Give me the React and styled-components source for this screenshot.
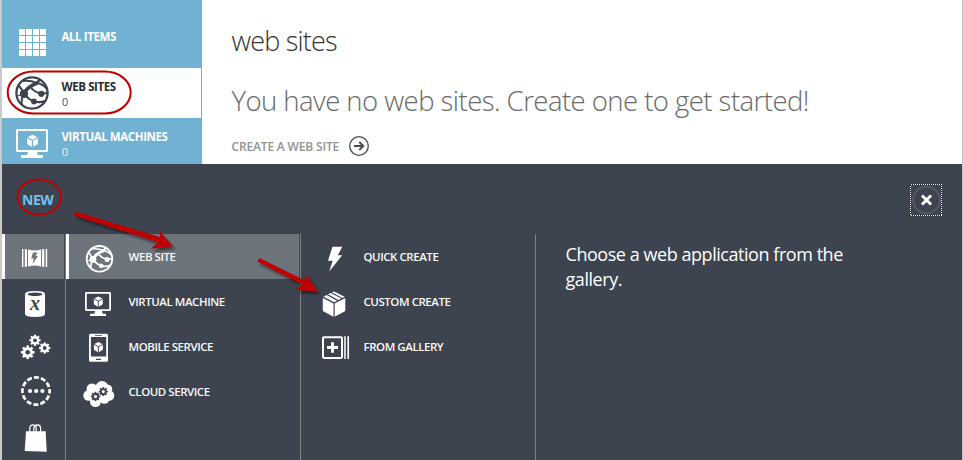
import React from 'react';
import styled, { createGlobalStyle } from 'styled-components';

const PANEL = '#3e444f';
const HILITE = '#6e747b';
const BLUE = '#71b1d1';

const GlobalStyle = createGlobalStyle`
  *, *::before, *::after { box-sizing: border-box; }
  body { margin: 0; overflow: hidden; font-family: "Open Sans", "Noto Sans", sans-serif; }
  svg { display: block; flex: none; }
`;

const Page = styled.div`
  position: relative;
  display: flex;
  flex-direction: column;
  width: 963px;
  height: 460px;
  overflow: hidden;
  background: #fff;
  border-left: 2px solid #cbcbcb;
  border-right: 1px solid #c4c6c8;
`;

const Top = styled.div`
  display: flex;
  height: 164px;
  overflow: hidden;
`;

const Sidebar = styled.nav`
  width: 200px;
  padding-top: 18px;
  background: ${BLUE};
`;

const NavItem = styled.div`
  display: flex;
  width: ${(p) => (p.$active ? '199px' : '200px')};
  height: 50px;
  background: ${(p) => (p.$active ? '#fff' : 'transparent')};
  color: ${(p) => (p.$active ? '#2b2b2b' : '#fff')};
`;

const NavText = styled.div`
  display: flex;
  flex-direction: column;
  padding: 11px 0 0 1.5px;
  white-space: nowrap;
`;

const NavTitle = styled.span`
  font-size: 11.5px;
  font-weight: 700;
  line-height: 16px;
  letter-spacing: -0.41px;
`;

const NavCount = styled.span`
  padding-left: 0.5px;
  font-size: 11px;
  font-weight: 400;
  line-height: 14px;
  opacity: 0.85;
`;

const Content = styled.main`
  display: flex;
  flex-direction: column;
  align-items: flex-start;
  padding: 21px 0 0 29.5px;
  white-space: nowrap;
`;

const Title = styled.h1`
  margin: 0;
  font-size: 27px;
  font-weight: 300;
  line-height: 40px;
  letter-spacing: -0.8px;
  color: #333;
`;

const Message = styled.p`
  margin: 20px 0 0;
  font-size: 27.5px;
  font-weight: 300;
  line-height: 40px;
  letter-spacing: -0.54px;
  color: #6a6a6a;
`;

const CreateLink = styled.a`
  display: flex;
  align-items: center;
  gap: 10px;
  height: 22px;
  margin-top: 14px;
  font-size: 12px;
  font-weight: 600;
  letter-spacing: -0.16px;
  color: #929292;
`;

const Drawer = styled.section`
  display: flex;
  flex-direction: column;
  flex: 1;
  background: ${PANEL};
  color: #fff;
`;

const DrawerHead = styled.header`
  display: flex;
  justify-content: space-between;
  height: 70px;
  padding: 20px 20px 0 20px;
`;

const DrawerTitle = styled.h2`
  margin: 0;
  font-size: 14px;
  font-weight: 700;
  line-height: 32px;
  letter-spacing: -0.5px;
  color: #70c3ee;
`;

const CloseButton = styled.button`
  width: 32px;
  height: 32px;
  padding: 0;
  border: 0;
  background: transparent;
`;

const Columns = styled.div`
  display: grid;
  grid-template-columns: 64px 235px 235px 1fr;
  flex: 1;
`;

const Column = styled.div`
  border-right: 1px solid #7f8388;
`;

const MenuItem = styled.div`
  display: flex;
  align-items: center;
  height: 45px;
  margin-right: 1px;
  padding-left: ${(p) => p.$indent}px;
  background: ${(p) => (p.$active ? HILITE : 'transparent')};
  box-shadow: ${(p) => (p.$active ? 'inset 3px 0 0 #fff' : 'none')};
`;

const MenuLabel = styled.span`
  padding: 0 0 1px ${(p) => p.$gap || 11.5}px;
  font-size: 11.5px;
  font-weight: 600;
  letter-spacing: -0.45px;
  white-space: nowrap;
  color: #f7f8f8;
`;

const Description = styled.p`
  margin: 0;
  padding: 8px 0 0 29.5px;
  width: 340px;
  font-size: 18px;
  line-height: 25px;
  letter-spacing: -0.45px;
`;

const Annotations = styled.svg`
  position: absolute;
  top: 0;
  left: -2px;
  pointer-events: none;
`;

/* Globe with connected nodes, drawn around the origin with radius 17. */
const GlobeMark = ({ color }) => (
  <g fill="none" stroke={color} strokeWidth="1.5">
    <circle r="15.6" strokeWidth="2.3" />
    <path d="M-8.5 1 Q-4 -7 5.5 -10" strokeWidth="3.6" />
    <path d="M-10 -12 Q-2 -13 5 -10 Q11 -9 15 -4" strokeWidth="2" />
    <path d="M-13.5 -8 Q-10 -4 -8.5 1 Q-11 6 -10.5 12" strokeWidth="2" />
    <path d="M-8 0 Q-4 6.500 2 8.500 Q8 10 13 8" strokeWidth="2.2" />
    <path d="M-1.500 -6 Q2 -1 9.500 .8 L15 0" strokeWidth="2" />
    <path d="M5 -10 L8 -14" strokeWidth="2.4" />
    <path d="M-15 3 L-8 1" strokeWidth="1.2" />
    <g fill={color} stroke="none">
      <circle cx="-8" cy=".8" r="4.200" />
      <circle cx="9.300" cy=".8" r="3.100" />
      <circle cx="2" cy="8.500" r="2.900" />
    </g>
  </g>
);

/* Isometric cube split by its three inner edges. */
const Cube = ({ x, y, s = 1, gap }) => (
  <g transform={`translate(${x} ${y}) scale(${s})`}>
    <path d="M0 -5.500 L4.700 -3 V2.700 L0 5.500 L-4.700 2.700 V-3Z" fill="#fff" />
    <path d="M-4.700 -3 L0 -.5 L4.700 -3 M0 -.5 V5.500" fill="none" stroke={gap} strokeWidth="1" />
  </g>
);

const Gear = ({ x, y, r, color = '#fff', teeth = 8, hole = PANEL }) => (
  <g transform={`translate(${x} ${y})`}>
    {Array.from({ length: teeth }, (_, i) => (
      <rect key={i} x={-r * 0.19} y={-r} width={r * 0.38} height={r * 0.6} fill={color} transform={`rotate(${(i * 360) / teeth})`} />
    ))}
    <circle r={r * 0.76} fill={color} />
    <circle r={r * 0.34} fill={hole} />
  </g>
);

const NavIcon = ({ children }) => (
  <svg width="58" height="50" viewBox="0 0 58 50">{children}</svg>
);
const MenuIcon = ({ children }) => (
  <svg width="36" height="45" viewBox="0 0 36 45" fill="#fff">{children}</svg>
);

const GridIcon = () => (
  <NavIcon>
    {[0, 1, 2, 3].map((r) => [0, 1, 2, 3].map((c) => (
      <rect key={`${r}${c}`} x={17 + c * 7} y={11 + r * 7} width="6" height="6" fill="#fff" />
    )))}
  </NavIcon>
);
const NavGlobe = () => (
  <NavIcon><g transform="translate(30 25)"><GlobeMark color={PANEL} /></g></NavIcon>
);
const NavMonitor = () => (
  <NavIcon>
    <rect x="15" y="12" width="30" height="21" rx=".5" fill="none" stroke="#fff" strokeWidth="2" />
    <path d="M26 34 H35 L36 37 H41 V40 H19 V37 H25Z" fill="#fff" />
    <Cube x={30.4} y={23} s={1.15} gap={BLUE} />
  </NavIcon>
);

const MarketIcon = () => (
  <MenuIcon>
    <path d="M5 15 H6.400 V33 H5Z M7.800 15.300 H10 V32.700 H7.800Z M11 15.500 Q17.500 17.500 24 15.500 V32.500 Q17.500 30.500 11 32.500Z M25 15.300 H27.300 V32.700 H25Z M28.700 15 H30.200 V33 H28.700Z" />
    <path d="M16 18.500 H20.500 L18.800 22 H21 L15.500 30 L16.800 24.500 H14.200Z" fill={HILITE} />
  </MenuIcon>
);
const DatabaseIcon = () => (
  <MenuIcon>
    <path d="M8 15 Q8 12 18 12 T28 15 V35 Q28 38 18 38 T8 35Z" />
    <ellipse cx="18" cy="15.200" rx="7.300" ry="1.700" fill={PANEL} />
    <text x="18" y="31" textAnchor="middle" fontFamily="Liberation Serif, serif" fontSize="20" fontWeight="700" fontStyle="italic" fill={PANEL}>x</text>
  </MenuIcon>
);
const GearsIcon = () => (
  <MenuIcon>
    <Gear x={18} y={16.3} r={5.6} />
    <Gear x={10.7} y={28.3} r={6.8} />
    <Gear x={27.7} y={24} r={5.6} />
  </MenuIcon>
);
const DashedIcon = () => (
  <MenuIcon>
    <circle cx="19" cy="22" r="13.600" fill="none" stroke="#fff" strokeWidth="2.700" strokeDasharray="5 2.120" strokeDashoffset="2.500" />
    <circle cx="13" cy="22" r="2.100" /><circle cx="19.200" cy="22" r="2.100" /><circle cx="25.400" cy="22" r="2.100" />
  </MenuIcon>
);
const BagIcon = () => (
  <MenuIcon>
    <path d="M9 17.300 H28.700 L29.700 37.700 L7.700 37Z" />
    <path d="M12.800 18 V14 Q13 10.800 16 10.800 Q19 10.800 19.200 14 V18 M16.800 18 V14 Q17.500 10.800 20.500 10.800 Q23.500 11 23.600 14 V18" fill="none" stroke="#fff" strokeWidth="1.200" />
  </MenuIcon>
);
const MenuGlobe = () => (
  <MenuIcon><g transform="translate(18.500 24.800) scale(.82)"><GlobeMark color="#fff" /></g></MenuIcon>
);
const MenuMonitor = () => (
  <MenuIcon>
    <rect x="4.900" y="13.900" width="24.200" height="17.200" rx=".5" fill="none" stroke="#fff" strokeWidth="1.800" />
    <path d="M14 32 H21 L21.700 34.700 H25 V37 H9 V34.700 H13.300Z" />
    <Cube x={17.3} y={22.7} s={0.95} gap={PANEL} />
  </MenuIcon>
);
const PhoneIcon = () => (
  <MenuIcon>
    <rect x="8" y="9.800" width="19" height="28" rx="1.500" />
    <path d="M9.900 13 H25.200 V32.500 H9.900Z M14 11 H21 V11.700 H14Z M15 34.800 H20 V36 H15Z" fill={PANEL} />
    <Cube x={17.4} y={23.2} s={0.95} gap={PANEL} />
  </MenuIcon>
);
const CloudIcon = () => (
  <MenuIcon>
    <circle cx="7.500" cy="26.500" r="5.200" /><circle cx="11" cy="20" r="5.500" /><circle cx="21" cy="18.500" r="6.500" />
    <circle cx="28" cy="26.500" r="5.300" /><circle cx="14.500" cy="32.500" r="5.500" /><circle cx="23.500" cy="30" r="4.800" />
    <circle cx="27" cy="20" r="4.200" /><circle cx="17" cy="25" r="8" />
    <Gear x={14.5} y={27.5} r={4.7} color={PANEL} hole="#fff" />
    <Gear x={22.3} y={22.6} r={4.5} color={PANEL} hole="#fff" />
  </MenuIcon>
);
const BoltIcon = () => (
  <MenuIcon><path d="M15.500 12.700 H25.300 L20.800 21.300 H25.200 L12.200 37.600 L15.700 26.700 H11Z" /></MenuIcon>
);
const BoxIcon = () => (
  <MenuIcon>
    <path d="M5.800 19 L16.500 24.500 V37.700 L5.800 32Z M28.300 19 L17.700 24.500 V37.700 L28.300 32Z" />
    <path d="M6.500 17.700 L9.600 16 L20.200 21.800 L17.100 23.300Z M10.900 15.300 L13.600 13.900 L24.200 19.600 L21.500 21.100Z M14.800 13.200 L17 12.500 L27.700 17.700 L25.400 19Z" />
  </MenuIcon>
);
const GalleryIcon = () => (
  <MenuIcon>
    <rect x="6" y="13.200" width="19" height="20.700" rx=".8" fill="none" stroke="#fff" strokeWidth="2" />
    <path d="M27.200 12.200 H28.700 V34.900 H27.200Z M30.400 12.200 H32 V34.900 H30.400Z M14.100 18.200 H16.900 V22.100 H21 V24.900 H16.900 V28.800 H14.100 V24.900 H10 V22.100 H14.100Z" />
  </MenuIcon>
);

const CATEGORIES = [MarketIcon, DatabaseIcon, GearsIcon, DashedIcon, BagIcon];
const SERVICES = [
  ['WEB SITE', MenuGlobe],
  ['VIRTUAL MACHINE', MenuMonitor],
  ['MOBILE SERVICE', PhoneIcon],
  ['CLOUD SERVICE', CloudIcon],
];
const ACTIONS = [
  ['QUICK CREATE', BoltIcon],
  ['CUSTOM CREATE', BoxIcon],
  ['FROM GALLERY', GalleryIcon],
];

export default function App() {
  return (
    <Page>
      <GlobalStyle />
      <Top>
        <Sidebar>
          <NavItem>
            <GridIcon />
            <NavText><NavTitle>ALL ITEMS</NavTitle></NavText>
          </NavItem>
          <NavItem $active>
            <NavGlobe />
            <NavText><NavTitle>WEB SITES</NavTitle><NavCount>0</NavCount></NavText>
          </NavItem>
          <NavItem>
            <NavMonitor />
            <NavText><NavTitle>VIRTUAL MACHINES</NavTitle><NavCount>0</NavCount></NavText>
          </NavItem>
        </Sidebar>
        <Content>
          <Title>web sites</Title>
          <Message>You have no web sites. Create one to get started!</Message>
          <CreateLink>
            CREATE A WEB SITE
            <svg width="20" height="20" viewBox="0 0 20 20" fill="none" stroke="#4c4c4c">
              <circle cx="10" cy="10" r="9.300" strokeWidth="1.300" />
              <path d="M5 10 H14 M10.300 6 L14.300 10 L10.300 14" strokeWidth="1.900" />
            </svg>
          </CreateLink>
        </Content>
      </Top>

      <Drawer>
        <DrawerHead>
          <DrawerTitle>NEW</DrawerTitle>
          <CloseButton aria-label="Close">
            <svg width="32" height="32" viewBox="0 0 32 32" fill="none">
              <rect x=".5" y=".5" width="31" height="31" stroke="#22262c" />
              <rect x=".5" y=".5" width="31" height="31" stroke="#fff" strokeDasharray="1 1" shapeRendering="crispEdges" />
              <circle cx="16.500" cy="16" r="13.300" stroke="#565b66" strokeWidth="1.800" />
              <path d="M12 11.500 L21 20.500 M21 11.500 L12 20.500" stroke="#fff" strokeWidth="2.900" />
            </svg>
          </CloseButton>
        </DrawerHead>
        <Columns>
          <Column>
            {CATEGORIES.map((Icon, i) => (
              <MenuItem key={i} $indent={15} $active={i === 0}><Icon /></MenuItem>
            ))}
          </Column>
          <Column>
            {SERVICES.map(([label, Icon], i) => (
              <MenuItem key={label} $indent={15} $active={i === 0}>
                <Icon /><MenuLabel>{label}</MenuLabel>
              </MenuItem>
            ))}
          </Column>
          <Column>
            {ACTIONS.map(([label, Icon]) => (
              <MenuItem key={label} $indent={16}>
                <Icon /><MenuLabel $gap={10.5}>{label}</MenuLabel>
              </MenuItem>
            ))}
          </Column>
          <Description>Choose a web application from the gallery.</Description>
        </Columns>
      </Drawer>

      <Annotations width="963" height="460" viewBox="0 0 963 460">
        <defs>
          <filter id="shade" x="-20%" y="-30%" width="150%" height="180%">
            <feDropShadow dx="2.500" dy="3" stdDeviation="1.800" floodColor="#000" floodOpacity=".5" />
          </filter>
        </defs>
        <g fill="none" stroke="#c00000" strokeWidth="2">
          <rect x="7.700" y="71.500" width="123" height="42" rx="26" ry="21" />
          <ellipse cx="39.200" cy="197" rx="21.700" ry="17.600" />
        </g>
        <g fill="#c00000" filter="url(#shade)">
          <path d="M75.300 211.600 L160.500 237.300 L158.700 230.600 L172.800 246 L150.700 248.800 L158.200 242 L74 215.600Z" />
          <path d="M259.400 258 L304.800 280.500 L305 273.700 L317.800 291.300 L295.700 290 L302.500 284.500 L257.400 261.500Z" />
        </g>
      </Annotations>
    </Page>
  );
}
